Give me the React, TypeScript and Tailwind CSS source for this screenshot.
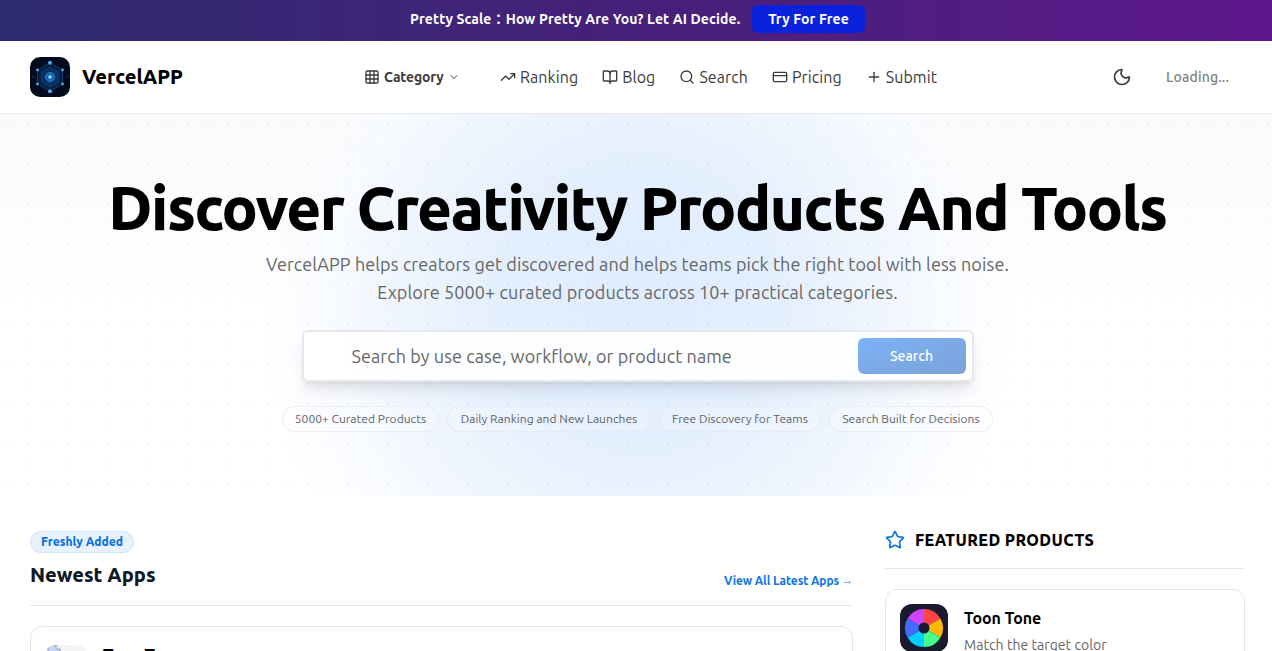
import {
  BookOpen,
  ChevronDown,
  CreditCard,
  Grid3x3,
  Moon,
  Plus,
  Search,
  Star,
  TrendingUp,
} from 'lucide-react';

const navItems = [
  { label: 'Ranking', icon: TrendingUp },
  { label: 'Blog', icon: BookOpen },
  { label: 'Search', icon: Search },
  { label: 'Pricing', icon: CreditCard },
  { label: 'Submit', icon: Plus },
];

const highlights = [
  { label: '5000+ Curated Products', width: 'w-[157px]' },
  { label: 'Daily Ranking and New Launches', width: 'w-[204px]' },
  { label: 'Free Discovery for Teams', width: 'w-[162px]' },
  { label: 'Search Built for Decisions', width: 'w-[164px]' },
];

const Logo = () => (
  <svg viewBox="0 0 40 40" className="h-10 w-10 rounded-[10px]">
    <defs>
      <radialGradient id="glow">
        <stop offset="0" stopColor="#1479d8" />
        <stop offset="0.55" stopColor="#07457f" />
        <stop offset="1" stopColor="#020a20" />
      </radialGradient>
    </defs>
    <rect width="40" height="40" fill="#020a1c" />
    <circle cx="20" cy="20" r="15" fill="url(#glow)" opacity="0.6" />
    <path d="M20 6L32.5 13V27L20 34L7.5 27V13Z" fill="none" stroke="#235078" strokeWidth="0.6" />
    <path d="M20 10.5L28.2 15.2V24.8L20 29.5L11.8 24.8V15.2Z" fill="#06305f" stroke="#114a80" strokeWidth="0.6" />
    <circle cx="20" cy="20" r="4.5" fill="#1265b0" stroke="#2b85d8" strokeWidth="0.8" />
    <circle cx="20" cy="20" r="1.8" fill="#93d8fb" />
    <g fill="#56a8ea">
      <circle cx="20" cy="5.8" r="2" />
      <circle cx="20" cy="34.3" r="2" />
      <circle cx="32.5" cy="13" r="1.4" />
      <circle cx="32.5" cy="27" r="1.4" />
      <circle cx="7.5" cy="27" r="1.4" />
      <circle cx="7.5" cy="13" r="1.4" />
    </g>
    <circle cx="3" cy="20" r="0.8" fill="#12508a" />
    <circle cx="37" cy="20" r="0.8" fill="#12508a" />
  </svg>
);

const ColorWheel = () => (
  <svg viewBox="0 0 48 48" className="h-12 w-12 shrink-0 rounded-xl">
    <rect width="48" height="48" fill="#1a1a2e" />
    <path d="M24 24V5A19 19 0 0 1 40.45 14.5Z" fill="#ff4545" />
    <path d="M24 24L40.45 14.5A19 19 0 0 1 40.45 33.5Z" fill="#ffb800" />
    <path d="M24 24L40.45 33.5A19 19 0 0 1 24 43Z" fill="#45ff8a" />
    <path d="M24 24V43A19 19 0 0 1 7.55 33.5Z" fill="#00cfff" />
    <path d="M24 24L7.55 33.5A19 19 0 0 1 7.55 14.5Z" fill="#456aff" />
    <path d="M24 24L7.55 14.5A19 19 0 0 1 24 5Z" fill="#cf45ff" />
    <circle cx="24" cy="24" r="5.5" fill="#1a1a2e" />
  </svg>
);

const Banner = () => (
  <div className="flex h-[41px] items-start justify-center bg-gradient-to-r from-[#2d2b70] via-[#46207a] to-[#5d178b] pl-[3px] pt-[5px] text-sm font-bold text-white">
    <p className="w-[342px] whitespace-nowrap leading-7 tracking-[0.13px]">
      Pretty Scale：How Pretty Are You? Let AI Decide.
    </p>
    <a href="#" className="h-7 w-[113px] whitespace-nowrap rounded-md bg-[#0a22dc] text-center leading-7 tracking-[0.13px]">
      Try For Free
    </a>
  </div>
);

const Header = () => (
  <header className="flex h-[73px] items-center border-b border-gray-200 bg-white pl-[30px] pr-[43px] text-[#3b3b3b]">
    <a href="#" className="flex w-[334px] items-center gap-3">
      <Logo />
      <span className="text-xl font-extrabold text-black">VercelAPP</span>
    </a>
    <nav className="flex items-center">
      <button className="mr-[42px] flex w-[94px] items-center gap-1 text-sm font-semibold">
        <Grid3x3 size={16} className="shrink-0" />
        <span className="w-[61px] whitespace-nowrap text-left tracking-[-0.15px]">Category</span>
        <ChevronDown size={12} className="shrink-0" />
      </button>
      <div className="flex items-center gap-6">
        {navItems.map(({ label, icon: Icon }) => (
          <a key={label} href="#" className="flex items-center gap-1 text-base tracking-[0.08px]">
            <Icon size={16} />
            {label}
          </a>
        ))}
      </div>
    </nav>
    <div className="ml-auto flex items-center gap-[34px]">
      <Moon size={20} />
      <span className="w-[63px] whitespace-nowrap text-sm font-medium tracking-[0.15px] text-[#808080]">Loading...</span>
    </div>
  </header>
);

const Hero = () => (
  <section className="relative h-[382px] overflow-hidden bg-gradient-to-b from-[#fafafa] to-white to-50%">
    <div className="absolute inset-0 bg-[radial-gradient(circle_at_638px_190px,#e0edff_0,#e4effe_140px,#eef5fe_230px,#f7faff_300px,transparent_380px)]" />
    <div className="absolute inset-0 bg-[radial-gradient(circle,rgba(0,0,0,0.12)_1px,transparent_1px)] bg-[size:20px_20px] bg-[position:-2px_0] opacity-40" />
    <div className="relative flex flex-col items-center pl-[3px] pt-[64px]">
      <h1 className="whitespace-nowrap text-6xl font-extrabold leading-[60px] tracking-[-1.5px] text-black">
        Discover Creativity Products And Tools
      </h1>
      <p className="mt-[12px] whitespace-nowrap text-center text-lg leading-7 tracking-[0.1px] text-[#666]">
        VercelAPP helps creators get discovered and helps teams pick the right tool with less noise.
        <br />
        Explore 5000+ curated products across 10+ practical categories.
      </p>
      <form className="mt-6 flex h-[52px] w-[672px] items-center rounded-md border-2 border-gray-200 bg-white/90 pl-12 pr-[6px] shadow-lg">
        <input
          className="min-w-0 flex-1 bg-transparent text-lg tracking-[0.08px] outline-none placeholder:text-[#666]"
          placeholder="Search by use case, workflow, or product name"
        />
        <button className="h-9 w-[108px] rounded-md bg-gradient-to-br from-[#7db2f5] to-[#7ba2da] text-sm font-medium text-white">
          Search
        </button>
      </form>
      <div className="mt-6 flex gap-2 text-xs text-[#5c5f66]">
        {highlights.map(({ label, width }) => (
          <span key={label} className={`${width} whitespace-nowrap rounded-full border border-gray-200/70 bg-white/20 text-center leading-6 tracking-[0.04px]`}>
            {label}
          </span>
        ))}
      </div>
    </div>
  </section>
);

const NewestApps = () => (
  <section className="w-[823px]">
    <div className="flex items-end justify-between border-b border-gray-200 pb-4">
      <div>
        <span className="block h-[22px] w-[104px] whitespace-nowrap rounded-full border border-[#cfe3fb] bg-[#e8f2fe] text-center text-xs font-extrabold leading-5 text-[#0b74e5]">
          Freshly Added
        </span>
        <h2 className="mt-2 text-xl font-extrabold leading-7 text-[#111827]">Newest Apps</h2>
      </div>
      <a href="#" className="mb-0.5 flex gap-[3px] whitespace-nowrap text-xs font-semibold leading-[13px] tracking-[-0.1px] text-[#0b74e5]">
        View All Latest Apps
        <span className="font-['Liberation_Sans',sans-serif] text-[11px] font-normal">→</span>
      </a>
    </div>
    <article className="mt-5 flex h-40 gap-[15px] rounded-xl border border-gray-200 px-[13px] pt-[18px]">
      <div className="h-11 w-11 overflow-hidden rounded-xl bg-gray-100">
        <svg viewBox="0 0 16 16" className="ml-0.5 h-4 w-4">
          <path d="M2 0H10L14 4V15H2Z" fill="#c6d5f5" stroke="#9a9a9a" />
          <path d="M10 0V4H14" fill="#fff" stroke="#9a9a9a" />
        </svg>
      </div>
      <h3 className="-mt-1 text-[17px] font-extrabold leading-7 tracking-[-0.5px] text-black">Toon Tone</h3>
    </article>
  </section>
);

const Featured = () => (
  <aside className="w-[360px]">
    <div className="flex h-[38px] items-start gap-[10px] border-b border-gray-200">
      <Star size={20} className="mt-[-1px] text-[#0b74e5]" />
      <h2 className="whitespace-nowrap text-base font-extrabold leading-[18px] tracking-[0.4px] text-black">FEATURED PRODUCTS</h2>
    </div>
    <article className="mt-5 flex h-40 gap-4 rounded-xl border border-gray-200 p-[14px]">
      <ColorWheel />
      <div>
        <h3 className="font-semibold leading-7 tracking-[-0.05px] text-black">Toon Tone</h3>
        <p className="pt-px text-sm leading-6 tracking-[0.06px] text-[#666]">Match the target color</p>
      </div>
    </article>
  </aside>
);

export default function App() {
  return (
    <div className="h-[651px] overflow-hidden bg-white font-['Ubuntu','Noto_Sans','Noto_Sans_CJK_TC',sans-serif]">
      <Banner />
      <Header />
      <Hero />
      <main className="flex justify-between pl-[30px] pr-[27px] pt-[35px]">
        <NewestApps />
        <Featured />
      </main>
    </div>
  );
}
